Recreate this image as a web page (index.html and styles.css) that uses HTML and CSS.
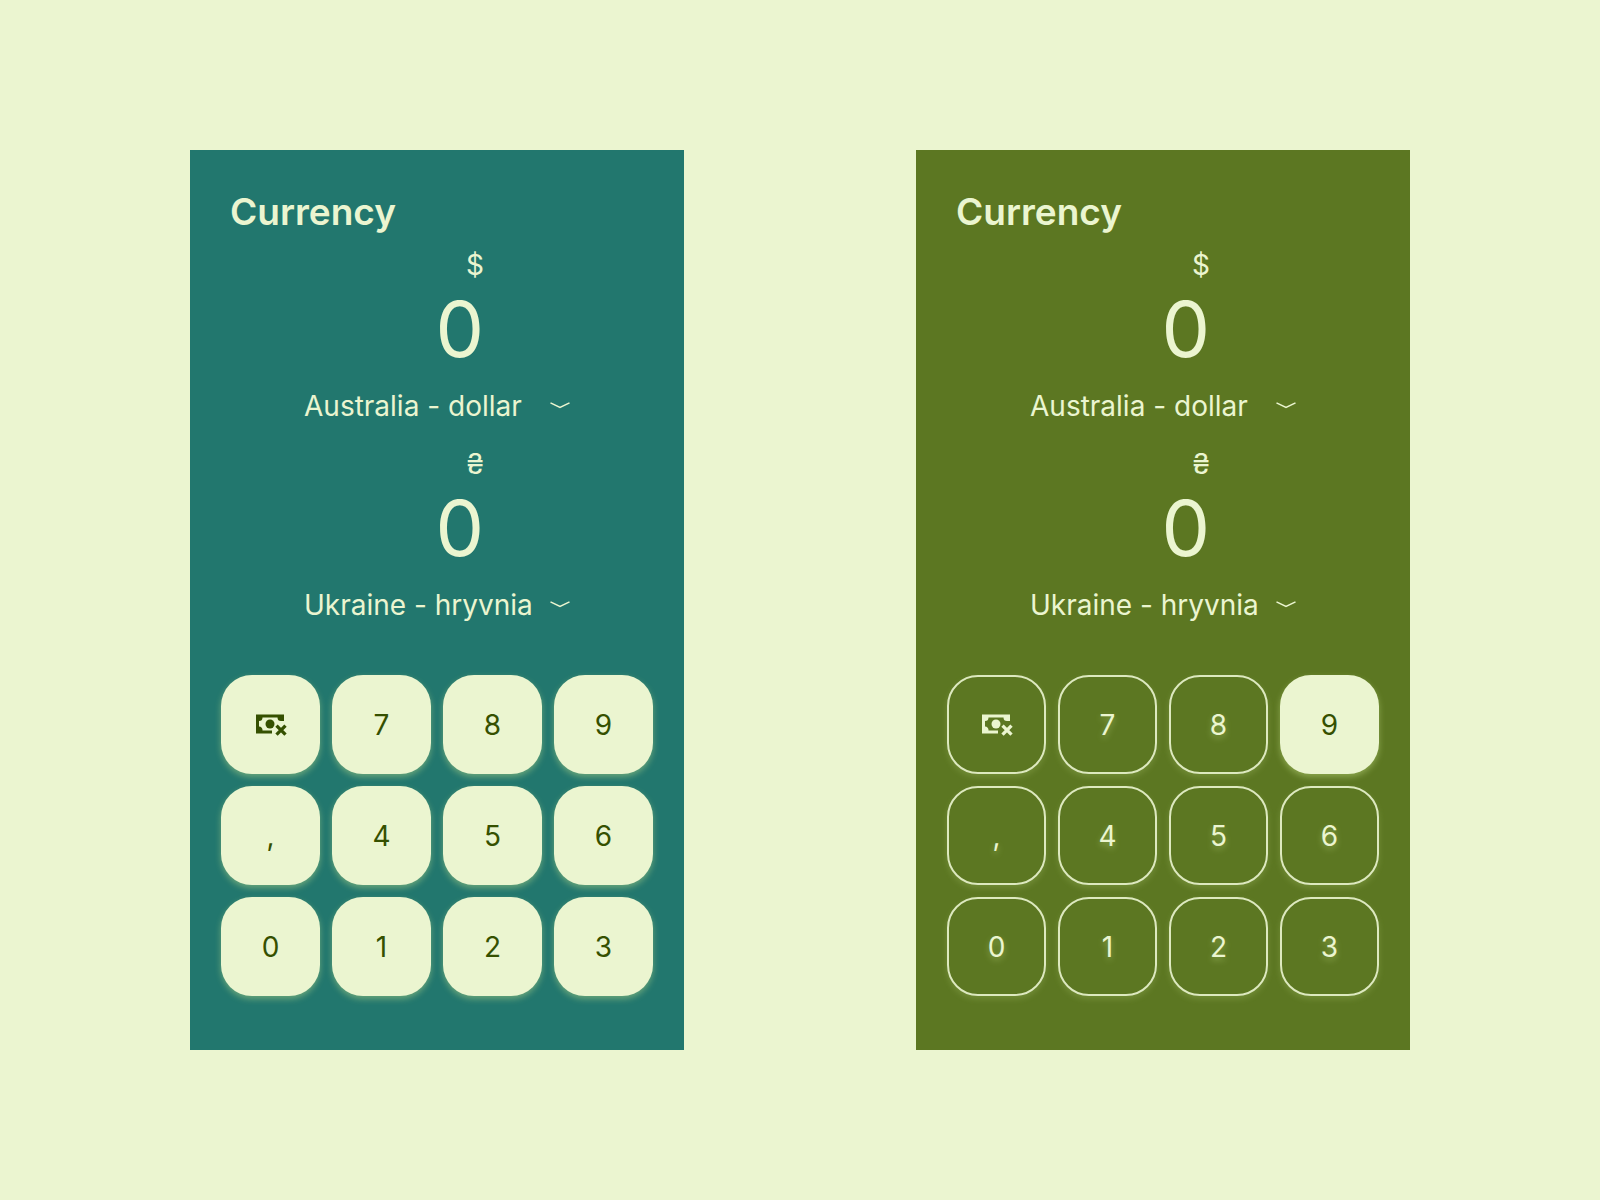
FILE: index.html
```
<!DOCTYPE html>
<html lang="en">
<head>
<meta charset="utf-8">
<meta name="viewport" content="width=device-width, initial-scale=1">
<title>Currency</title>
<link rel="stylesheet" href="styles.css">
</head>
<body>
<svg class="sprite" aria-hidden="true">
  <symbol id="cash-remove" viewBox="0 0 32 24">
    <path fill="currentColor" d="M1 1.500H29V8H26A3.500 3.500 0 0 1 22.500 4.500H7.500A3.500 3.500 0 0 1 4 8V13.500A3.500 3.500 0 0 1 7.500 17.500H17V20.500H1Z"/>
    <circle cx="15" cy="11" r="4.500" fill="currentColor"/>
    <path d="M21.500 12.700L30.500 21.700M30.500 12.700L21.500 21.700" stroke="currentColor" stroke-width="3.300" fill="none"/>
  </symbol>
  <symbol id="chevron" viewBox="0 0 20 8">
    <path d="M0.500 0.800L10 5.500L19.500 0.800" fill="none" stroke="currentColor" stroke-width="1.500"/>
  </symbol>
</svg>
<main class="board">
  <section class="calc calc--teal" aria-label="Currency converter, teal">
    <h1 class="title">Currency</h1>
    <div class="amounts">
      <div class="amount">
        <span class="sign">$</span>
        <output class="value">0</output>
        <div class="picker">
          <select class="picker-select" aria-label="From currency"><option>Australia - dollar</option></select>
          <svg class="chevron" aria-hidden="true"><use href="#chevron"/></svg>
        </div>
      </div>
      <div class="amount">
        <span class="sign">₴</span>
        <output class="value">0</output>
        <div class="picker">
          <select class="picker-select" aria-label="To currency"><option>Ukraine - hryvnia</option></select>
          <svg class="chevron" aria-hidden="true"><use href="#chevron"/></svg>
        </div>
      </div>
    </div>
    <div class="keypad">
      <button class="key" type="button" aria-label="Clear"><svg class="key-icon" aria-hidden="true"><use href="#cash-remove"/></svg></button>
      <button class="key" type="button">7</button>
      <button class="key" type="button">8</button>
      <button class="key" type="button">9</button>
      <button class="key" type="button">,</button>
      <button class="key" type="button">4</button>
      <button class="key" type="button">5</button>
      <button class="key" type="button">6</button>
      <button class="key" type="button">0</button>
      <button class="key" type="button">1</button>
      <button class="key" type="button">2</button>
      <button class="key" type="button">3</button>
    </div>
  </section>
  <section class="calc calc--olive" aria-label="Currency converter, olive">
    <h1 class="title">Currency</h1>
    <div class="amounts">
      <div class="amount">
        <span class="sign">$</span>
        <output class="value">0</output>
        <div class="picker">
          <select class="picker-select" aria-label="From currency"><option>Australia - dollar</option></select>
          <svg class="chevron" aria-hidden="true"><use href="#chevron"/></svg>
        </div>
      </div>
      <div class="amount">
        <span class="sign">₴</span>
        <output class="value">0</output>
        <div class="picker">
          <select class="picker-select" aria-label="To currency"><option>Ukraine - hryvnia</option></select>
          <svg class="chevron" aria-hidden="true"><use href="#chevron"/></svg>
        </div>
      </div>
    </div>
    <div class="keypad">
      <button class="key key--outline" type="button" aria-label="Clear"><svg class="key-icon" aria-hidden="true"><use href="#cash-remove"/></svg></button>
      <button class="key key--outline" type="button">7</button>
      <button class="key key--outline" type="button">8</button>
      <button class="key" type="button">9</button>
      <button class="key key--outline" type="button">,</button>
      <button class="key key--outline" type="button">4</button>
      <button class="key key--outline" type="button">5</button>
      <button class="key key--outline" type="button">6</button>
      <button class="key key--outline" type="button">0</button>
      <button class="key key--outline" type="button">1</button>
      <button class="key key--outline" type="button">2</button>
      <button class="key key--outline" type="button">3</button>
    </div>
  </section>
</main>
</body>
</html>
```
FILE: styles.css
```
:root {
  --cream: #ebf5d0;
  --ink: #355000;
  --teal: #22776e;
  --olive: #5c7722;
  --glow: rgb(205 230 140 / 42%);
  --glow-soft: rgb(205 230 140 / 20%);
}

* {
  box-sizing: border-box;
}

body {
  margin: 0;
  background: var(--cream);
  color: var(--cream);
  font-family: Inter, "Liberation Sans", sans-serif;
  font-size: 28px;
  line-height: 34px;
}

.sprite {
  display: none;
}

.board {
  display: flex;
  flex-wrap: wrap;
  justify-content: space-between;
  gap: 40px;
  padding: 150px 190px;
}

.calc {
  flex: 0 1 494px;
  padding: 40px 31px 54px;
}

.calc--teal {
  background: var(--teal);
}

.calc--olive {
  background: var(--olive);
}

.title {
  margin: 0 0 14px;
  padding-left: 9px;
  font-size: 37px;
  line-height: 44px;
  font-weight: 600;
}

.amounts {
  display: grid;
  gap: 24px;
  justify-content: center;
  margin-bottom: 53px;
}

.amount {
  display: flex;
  flex-direction: column;
  align-items: flex-end;
}

.sign,
.value {
  padding-right: 86px;
}

.value {
  margin-bottom: 13px;
  font-size: 77px;
  line-height: 94px;
}

.picker {
  display: grid;
  align-items: center;
  width: 266px;
}

.picker > * {
  grid-area: 1 / 1;
}

.picker-select {
  appearance: none;
  width: 100%;
  height: 34px;
  margin: 0;
  padding: 0;
  border: 0;
  background: transparent;
  color: inherit;
  font: inherit;
}

.picker-select option {
  color: var(--ink);
}

.chevron {
  justify-self: end;
  width: 20px;
  height: 8px;
  pointer-events: none;
}

.keypad {
  display: grid;
  grid-template-columns: repeat(4, 1fr);
  gap: 12px;
}

.key {
  display: flex;
  align-items: center;
  justify-content: center;
  aspect-ratio: 1;
  padding: 0;
  border: 0;
  border-radius: 31px;
  background: var(--cream);
  color: var(--ink);
  font: inherit;
  box-shadow: 0 3px 6px var(--glow);
}

.key--outline {
  border: 2px solid rgb(235 245 208 / 90%);
  background: transparent;
  color: var(--cream);
  box-shadow: 0 3px 6px var(--glow-soft);
  text-shadow: 0 3px 6px var(--glow);
}

.key-icon {
  width: 32px;
  height: 24px;
}
```
